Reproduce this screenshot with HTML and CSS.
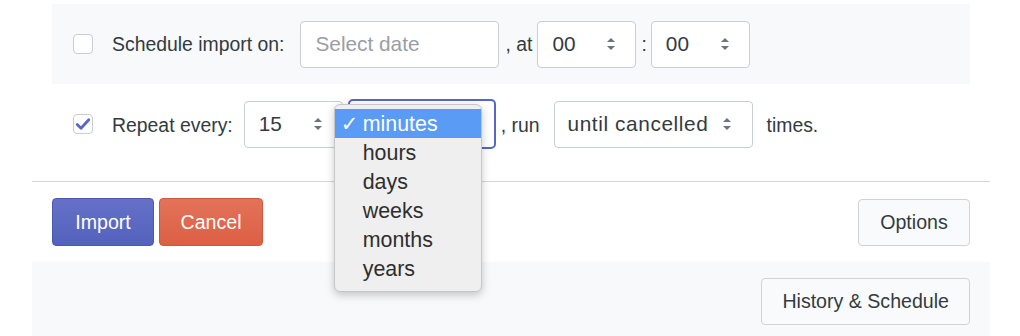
FILE: index.html
```html
<!DOCTYPE html>
<html lang="en">

<head>
  <meta charset="UTF-8">
  <meta name="viewport" content="width=device-width, initial-scale=1.0">
  <title>Import schedule</title>
  <link rel="stylesheet" href="styles.css">
</head>

<body>

  <section class="importer">
    <div class="form">
      <div class="row schedule">
        <span class="check"></span>
        <span class="label">Schedule import on:</span>
        <div class="field date placeholder">Select date</div>
        <span class="sep at">, at</span>
        <div class="field select time">00
          <svg class="arrows" width="10" height="16" viewBox="0 0 10 16"><path d="M5 2 L9 6 H1 Z M5 14 L9 10 H1 Z" fill="#6b7480"/></svg>
        </div>
        <span class="sep colon">:</span>
        <div class="field select time">00
          <svg class="arrows" width="10" height="16" viewBox="0 0 10 16"><path d="M5 2 L9 6 H1 Z M5 14 L9 10 H1 Z" fill="#6b7480"/></svg>
        </div>
      </div>

      <div class="row repeat">
        <span class="check checked">
          <svg width="16" height="16" viewBox="0 0 16 16"><path d="M2.2 8.6 L6 12.2 L13.8 3.8" fill="none" stroke="#5a66c6" stroke-width="2.8" stroke-linecap="round" stroke-linejoin="round"/></svg>
        </span>
        <span class="label">Repeat every:</span>
        <div class="field select every">15
          <svg class="arrows" width="10" height="16" viewBox="0 0 10 16"><path d="M5 2 L9 6 H1 Z M5 14 L9 10 H1 Z" fill="#6b7480"/></svg>
        </div>
        <div class="unit">
          <div class="field focused"></div>
          <ul class="menu">
            <li class="active"><span class="tick">✓</span>minutes</li>
            <li>hours</li>
            <li>days</li>
            <li>weeks</li>
            <li>months</li>
            <li>years</li>
          </ul>
        </div>
        <span class="sep run">, run</span>
        <div class="field select until">until cancelled
          <svg class="arrows" width="10" height="16" viewBox="0 0 10 16"><path d="M5 2 L9 6 H1 Z M5 14 L9 10 H1 Z" fill="#6b7480"/></svg>
        </div>
        <span class="sep times">times.</span>
      </div>
    </div>

    <div class="actions">
      <button class="btn import">Import</button>
      <button class="btn cancel">Cancel</button>
      <button class="btn plain options">Options</button>
    </div>

    <footer class="footer">
      <button class="btn plain">History &amp; Schedule</button>
    </footer>
  </section>

</body>

</html>
```

FILE: styles.css
```css
* {
  margin: 0;
  padding: 0;
  box-sizing: border-box;
  font-family: "Liberation Sans", Arial, sans-serif;

  --text-color: #333a40;
  --border-color: #c9ced5;
  --panel-bg: #f8f9fb;
}

body {
  background-color: white;
  color: var(--text-color);
  font-size: 19.4px;
}

.importer {
  width: 958px;
  margin-left: 32px;
}

.form {
  padding: 4px 20px 0;
  border-bottom: 1px solid #d3d6da;
  padding-bottom: 32px;
}

.row {
  display: flex;
  align-items: center;
  padding-left: 21px;
}

.schedule {
  background-color: var(--panel-bg);
  height: 80px;
}

.repeat {
  margin-top: 15px;
  height: 50px;
}

.check {
  width: 20px;
  height: 20px;
  border: 1px solid var(--border-color);
  border-radius: 4px;
  background-color: white;
  display: grid;
  place-content: center;
  margin-right: 19px;
}

.label {
  margin-right: 16px;
}

.repeat .label {
  margin-right: 11px;
  padding-top: 2px;
}

.field {
  height: 47px;
  border: 1px solid var(--border-color);
  border-radius: 4px;
  background-color: white;
  display: flex;
  align-items: center;
  padding-left: 14px;
  font-size: 20.8px;
}

.placeholder {
  color: #9a9ea3;
}

.select {
  justify-content: space-between;
  padding-right: 19px;
}

.date {
  width: 199px;
}

.time {
  width: 99px;
}

.every {
  width: 99px;
}

.until {
  width: 199px;
  padding-left: 13px;
  padding-right: 20px;
  letter-spacing: 0.6px;
}

.sep {
  margin: 0 5px 0 6px;
}

.colon {
  margin: 0 4px 0 5px;
}

.run {
  margin: 0 14px 0 5px;
  padding-top: 2px;
}

.times {
  margin-left: 14px;
  padding-top: 2px;
}

.unit {
  position: relative;
  margin-left: 5px;
}

.focused {
  width: 148px;
  height: 50px;
  border: 2px solid #5866c4;
  border-radius: 5px;
}

.menu {
  position: absolute;
  left: -14px;
  top: 5px;
  width: 148px;
  list-style: none;
  background-color: #efefef;
  border: 1px solid #c6c6c6;
  border-radius: 6px;
  box-shadow: 0 3px 9px rgba(0, 0, 0, 0.22);
  padding: 4px 0 8px;
  font-size: 21.4px;
  color: #2e2e2e;
}

.menu li {
  height: 29px;
  line-height: 31px;
  padding-left: 28px;
  position: relative;
}

.menu li.active {
  background-color: #5a9bf6;
  color: white;
}

.menu .tick {
  position: absolute;
  left: 6px;
  font-size: 21px;
  font-family: "DejaVu Sans", sans-serif;
}

.actions {
  display: flex;
  padding: 16px 20px;
  gap: 5px;
}

.btn {
  height: 48px;
  padding: 0 20px;
  font-size: 19.6px;
  border-radius: 4px;
  border: 1px solid;
  color: white;
}

.import {
  width: 102px;
  background: linear-gradient(#6571c7, #5462bc);
  border-color: #4c58b0;
}

.cancel {
  width: 104px;
  background: linear-gradient(#e2735a, #dc5f43);
  border-color: #d2563b;
}

.plain {
  height: 47px;
  color: var(--text-color);
  background-color: #f9fafb;
  border-color: #cfd3d8;
}

.options {
  margin-left: auto;
  width: 112px;
  margin-top: 1px;
}

.footer {
  background-color: var(--panel-bg);
  display: flex;
  justify-content: flex-end;
  padding: 16px 20px 20px;
}
```
